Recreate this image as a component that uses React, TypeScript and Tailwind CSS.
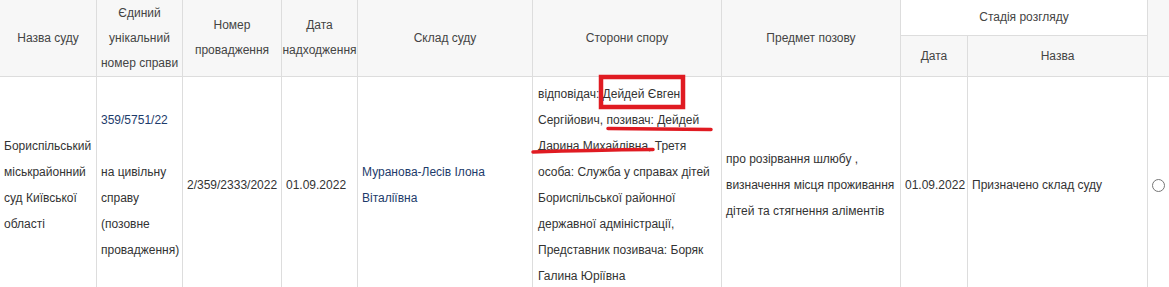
import React from "react";

const font = { fontFamily: '"Liberation Sans", Arial, sans-serif' };

function Lines({ lines, className = "" }: { lines: string[]; className?: string }) {
  return (
    <div className={className}>
      {lines.map((l, i) => (
        <div key={i} className="whitespace-nowrap">
          {l === "" ? "\u00a0" : l}
        </div>
      ))}
    </div>
  );
}

const th =
  "flex items-center justify-center text-center border-r border-b border-[#dddddd] bg-[#f7f7f7] text-[#444444] text-[12px] leading-[25px]";
const td =
  "flex items-center border-r border-[#dddddd] text-[#333333] text-[12px] leading-[26px] py-[4px] pl-[4px]";

export default function App() {
  return (
    <div className="relative w-[1169px] h-[287px] overflow-hidden bg-white" style={font}>
      <div className="grid grid-cols-[97px_86px_99px_76px_175px_189px_179px_67px_180px_40px] grid-rows-[36px_41px_216px] w-[1188px]">
        {/* header */}
        <div className={`${th} row-span-2`}>Назва суду</div>
        <div className={`${th} row-span-2`}>
          <Lines lines={["Єдиний", "унікальний", "номер справи"]} />
        </div>
        <div className={`${th} row-span-2`}>
          <Lines lines={["Номер", "провадження"]} />
        </div>
        <div className={`${th} row-span-2`}>
          <Lines lines={["Дата", "надходження"]} />
        </div>
        <div className={`${th} row-span-2`}>Склад суду</div>
        <div className={`${th} row-span-2`}>Сторони спору</div>
        <div className={`${th} row-span-2`}>Предмет позову</div>
        <div className={`${th} col-span-2 bg-white`}>Стадія розгляду</div>
        <div className={`${th} row-span-2`}></div>
        <div className={th}>Дата</div>
        <div className={th}>Назва</div>

        {/* body */}
        <div className={td}>
          <Lines lines={["Бориспільський", "міськрайонний", "суд Київської", "області"]} />
        </div>
        <div className={td}>
          <div>
            <div className="whitespace-nowrap text-[#1d3b6b]">359/5751/22</div>
            <div>&nbsp;</div>
            <Lines lines={["на цивільну", "справу", "(позовне", "провадження)"]} />
          </div>
        </div>
        <div className={`${td} pl-[2px]`}>2/359/2333/2022</div>
        <div className={`${td} pl-[3px]`}>01.09.2022</div>
        <div className={td}>
          <Lines className="text-[#1d3b6b]" lines={["Муранова-Лесів Ілона", "Віталіївна"]} />
        </div>
        <div className={`${td} pl-[5px]`}>
          <Lines
            lines={[
              "відповідач: Дейдей Євген",
              "Сергійович, позивач: Дейдей",
              "Дарина Михайлівна, Третя",
              "особа: Служба у справах дітей",
              "Бориспільської районної",
              "державної адміністрації,",
              "Представник позивача: Боряк",
              "Галина Юріївна",
            ]}
          />
        </div>
        <div className={td}>
          <Lines
            lines={[
              "про розірвання шлюбу ,",
              "визначення місця проживання",
              "дітей та стягнення аліментів",
            ]}
          />
        </div>
        <div className={td}>01.09.2022</div>
        <div className={td}>Призначено склад суду</div>
        <div className={`${td} pl-[3px]`}>
          <span className="block w-[13px] h-[13px] rounded-full border border-[#767676] bg-white" />
        </div>
      </div>

      {/* red annotations */}
      <svg
        className="absolute left-0 top-0 pointer-events-none"
        width="1169"
        height="287"
        viewBox="0 0 1169 287"
      >
        <rect x="601" y="77" width="82" height="30" fill="none" stroke="#e01b22" strokeWidth="4.5" />
        <path d="M608 128.5 L711 129.5" stroke="#e01b22" strokeWidth="3.5" strokeLinecap="round" fill="none" />
        <path d="M533 152 Q590 150 653 149.5" stroke="#e01b22" strokeWidth="3.5" strokeLinecap="round" fill="none" />
      </svg>
    </div>
  );
}
